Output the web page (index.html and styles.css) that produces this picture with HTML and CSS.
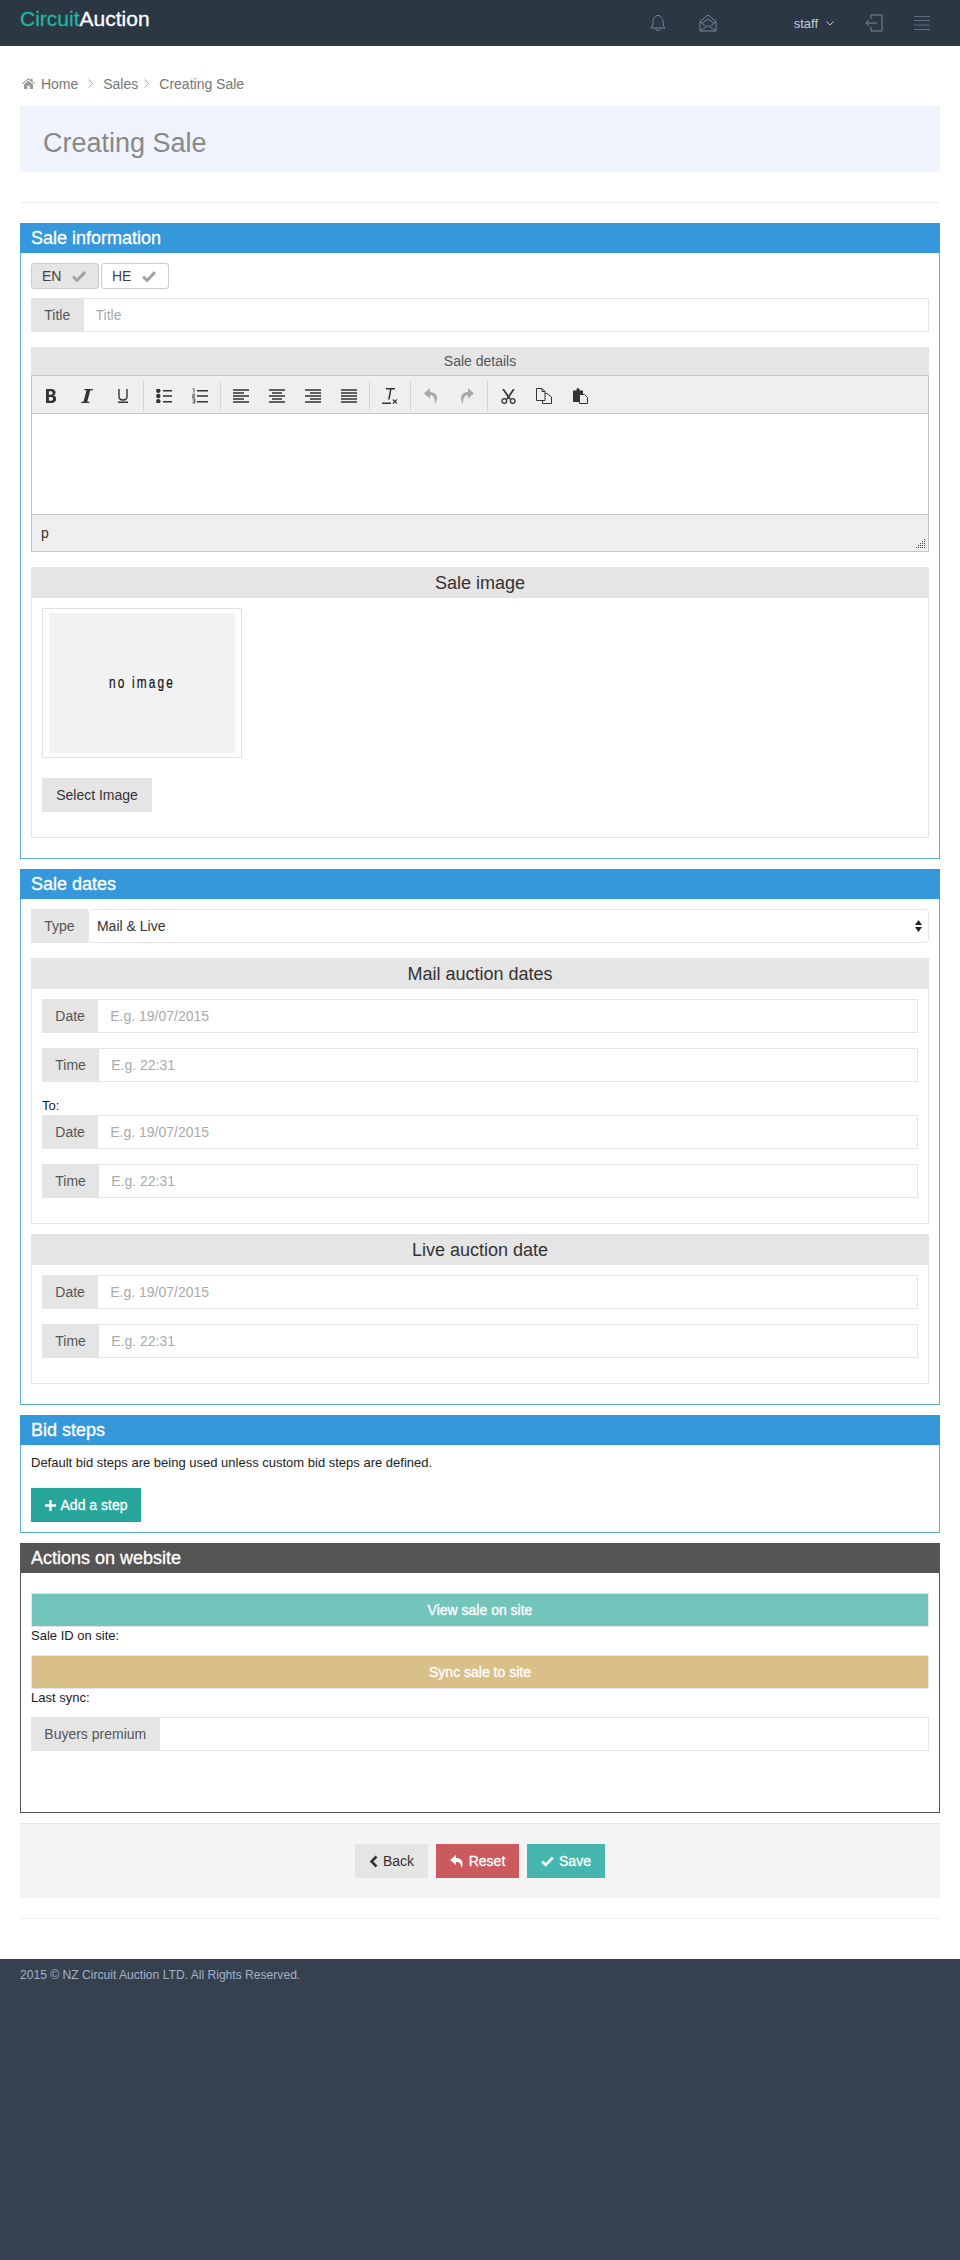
FILE: index.html
```html
<!DOCTYPE html>
<html lang="en">
<head>
    <meta charset="UTF-8">
    <meta name="viewport" content="width=device-width, initial-scale=1.0">
    <title>Creating Sale</title>
    <link rel="stylesheet" href="styles.css">
</head>
<body>
    <header class="topbar">
        <a class="logo" href="#"><span class="logo-circuit">Circuit</span>Auction</a>
        <nav class="top-nav">
            <svg class="nav-bell" width="16" height="18" viewBox="0 0 16 18"><path d="M1 14c1.500-1.500 2-3 2-6 0-3.500 2-6.500 5-6.500s5 3 5 6.500c0 3 .5 4.500 2 6z M6 15c0 2 4 2 4 0" fill="none" stroke="#7b8797" stroke-width="1"/></svg>
            <svg class="nav-mail" width="18" height="18" viewBox="0 0 18 18"><path d="M1 7.500 9 1l8 6.500V17H1z M1 7.500l5.500 4.500M17 7.500 11.500 12M1 17l8-5.500L17 17M3.500 9 9 5l5.500 4" fill="none" stroke="#7b8797" stroke-width="1"/></svg>
            <span class="nav-user">staff</span>
            <svg class="nav-caret" width="8" height="5" viewBox="0 0 8 5"><path d="M.5.500 4 4 7.500.5" fill="none" stroke="#c2ccd8" stroke-width="1"/></svg>
            <svg class="nav-logout" width="18" height="18" viewBox="0 0 18 18"><path d="M6 5V1h11v16H6v-4M12 9H1M4 6 1 9l3 3" fill="none" stroke="#7b8797" stroke-width="1"/></svg>
            <svg class="nav-menu" width="16" height="14" viewBox="0 0 16 14"><path d="M0 .5h16M0 4.500h16M0 9h16M0 13.500h16" fill="none" stroke="#5f6b7a" stroke-width="1"/></svg>
        </nav>
    </header>

    <main class="page">
        <ul class="breadcrumb">
            <li class="crumb-home">
                <svg width="13" height="11" viewBox="0 0 13 11"><path d="M6.500 0 0 5.500l.7.8L6.500 1.500l5.800 4.800.7-.8L10.500 3.400V.8H9v1.300zM2 6.500V11h3.300V7.800h2.400V11H11V6.500L6.500 2.800z" fill="#999"/></svg>
                <a href="#">Home</a>
            </li>
            <li class="crumb-sep"><svg width="5" height="9" viewBox="0 0 5 9"><path d="M.5.500l4 4-4 4" fill="none" stroke="#aaa"/></svg></li>
            <li><a href="#">Sales</a></li>
            <li class="crumb-sep crumb-sep-tight"><svg width="5" height="9" viewBox="0 0 5 9"><path d="M.5.500l4 4-4 4" fill="none" stroke="#aaa"/></svg></li>
            <li><a href="#">Creating Sale</a></li>
        </ul>

        <div class="page-title">
            <h1>Creating Sale</h1>
        </div>
        <hr class="divider divider-top">

        <form>
            <section class="panel">
                <h2 class="panel-heading">Sale information</h2>
                <div class="panel-body">
                    <div class="lang-tabs">
                        <button type="button" class="lang-tab active">EN <svg width="14" height="12" viewBox="0 0 14 12"><path d="M1 6.500 5 10.500 13 2" fill="none" stroke="#a3a3a3" stroke-width="3"/></svg></button>
                        <button type="button" class="lang-tab">HE <svg width="14" height="12" viewBox="0 0 14 12"><path d="M1 6.500 5 10.500 13 2" fill="none" stroke="#a3a3a3" stroke-width="3"/></svg></button>
                    </div>
                    <div class="input-group">
                        <label class="addon" for="title">Title</label>
                        <input type="text" id="title" placeholder="Title">
                    </div>

                    <h3 class="sub-heading sub-heading-small">Sale details</h3>
                    <div class="editor">
                        <div class="editor-toolbar">
                            <div class="tool-group tool-group-first">
                                <span class="tool"><svg width="12" height="14" viewBox="0 0 12 14"><path d="M1 0h5c3 0 4.500 1.300 4.500 3.500 0 1.400-.8 2.500-2 3 1.600.4 2.700 1.700 2.700 3.300 0 2.600-1.800 4.200-5 4.200H1zM3.900 2.300v3.500h1.700c1.300 0 2-.6 2-1.800S6.900 2.300 5.600 2.300zm0 5.700v3.700h2c1.400 0 2.200-.7 2.200-1.900S7.300 8 5.900 8z" fill="#333"/></svg></span>
                                <span class="tool"><svg width="12" height="14" viewBox="0 0 12 14"><path d="M3.500 0H12l-.3 1.300H9.300L6.200 12.700h2.300L8.200 14H0l.3-1.300h2.200L5.600 1.300H3.200z" fill="#333"/></svg></span>
                                <span class="tool"><svg width="12" height="14" viewBox="0 0 12 14"><path d="M2 0v7.500c0 2.500 1.500 3.500 4 3.500s4-1 4-3.500V0M1 13.300h10" fill="none" stroke="#333" stroke-width="1.400"/></svg></span>
                            </div>
                            <div class="tool-group">
                                <span class="tool"><svg width="16" height="14" viewBox="0 0 16 14"><circle cx="2.300" cy="1.800" r="2.200" fill="#333"/><circle cx="2.300" cy="7" r="2.200" fill="#333"/><circle cx="2.300" cy="12.300" r="2.200" fill="#333"/><path d="M7 1.700h9M7 7h9M7 12.800h9" stroke="#333" stroke-width="1.500"/></svg></span>
                                <span class="tool"><svg width="16" height="16" viewBox="0 0 16 16"><path d="M.7 1.200 2 .7v4M.3 6.200h2.400v1.600H.6v1.700h2.400M.4 11h2.500v4H.4M.8 13h2" fill="none" stroke="#333" stroke-width=".8"/><path d="M5 2.700h11M5 8h11M5 13.800h11" stroke="#333" stroke-width="1.500"/></svg></span>
                            </div>
                            <div class="tool-group">
                                <span class="tool"><svg width="16" height="14" viewBox="0 0 16 14"><path d="M0 1h16M0 4h11M0 7h16M0 10h11M0 13h16" stroke="#333" stroke-width="1.500"/></svg></span>
                                <span class="tool"><svg width="16" height="14" viewBox="0 0 16 14"><path d="M0 1h16M3 4h10M0 7h16M3 10h10M0 13h16" stroke="#333" stroke-width="1.500"/></svg></span>
                                <span class="tool"><svg width="16" height="14" viewBox="0 0 16 14"><path d="M0 1h16M5 4h11M0 7h16M5 10h11M0 13h16" stroke="#333" stroke-width="1.500"/></svg></span>
                                <span class="tool"><svg width="16" height="14" viewBox="0 0 16 14"><path d="M0 1h16M0 4h16M0 7h16M0 10h16M0 13h16" stroke="#333" stroke-width="1.500"/></svg></span>
                            </div>
                            <div class="tool-group">
                                <span class="tool"><svg width="16" height="16" viewBox="0 0 16 16"><path d="M4 0h9v1.500H9.500L7.600 11.500H6L8 1.500H4zM0 14.500h9V16H0z" fill="#333"/><path d="M10.800 11.500l4 4M14.800 11.500l-4 4" stroke="#333" stroke-width="1.100"/></svg></span>
                            </div>
                            <div class="tool-group">
                                <span class="tool"><svg width="14" height="16" viewBox="0 0 14 16"><path d="M6 0 0 5.500 6 10.500V7.300c3.500 0 5 2.500 5 8.700 3-4 3.500-11.500-5-12z" fill="#a8a8a8"/></svg></span>
                                <span class="tool"><svg width="14" height="16" viewBox="0 0 14 16"><path d="M8 0l6 5.500-6 5V7.300c-3.500 0-5 2.500-5 8.700-3-4-3.500-11.500 5-12z" fill="#a8a8a8"/></svg></span>
                            </div>
                            <div class="tool-group tool-group-last">
                                <span class="tool"><svg width="15" height="15" viewBox="0 0 15 15"><circle cx="3.300" cy="12" r="2.300" fill="none" stroke="#333" stroke-width="1.300"/><circle cx="11.700" cy="12" r="2.300" fill="none" stroke="#333" stroke-width="1.300"/><path d="M2 0l7 10M13 0 6 10" stroke="#333" stroke-width="1.700"/></svg></span>
                                <span class="tool"><svg width="16" height="16" viewBox="0 0 16 16"><path d="M.5.500h5.500l3 3v9h-8.500zM6 .5v3h3M9 5.500h2l4.500 3.500v6.500H6.500v-3" fill="none" stroke="#333"/></svg></span>
                                <span class="tool"><svg width="15" height="16" viewBox="0 0 15 16"><path d="M0 2.500h3.500V1c0-1 3-1 3 0v1.500H10V6H6v8H0z" fill="#333"/><path d="M6.500 6.500h5l3 3v6h-8z" fill="#eee" stroke="#333"/></svg></span>
                            </div>
                        </div>
                        <div class="editor-area"></div>
                        <div class="editor-status">
                            <span>p</span>
                            <svg class="resize-grip" width="9" height="9" viewBox="0 0 9 9"><path d="M8 0h1v1H8zM6 2h1v1H6zM8 2h1v1H8zM4 4h1v1H4zM6 4h1v1H6zM8 4h1v1H8zM2 6h1v1H2zM4 6h1v1H4zM6 6h1v1H6zM8 6h1v1H8zM0 8h1v1H0zM2 8h1v1H2zM4 8h1v1H4zM6 8h1v1H6zM8 8h1v1H8z" fill="#444"/></svg>
                        </div>
                    </div>

                    <h3 class="sub-heading">Sale image</h3>
                    <div class="box box-image">
                        <div class="thumb"><div class="thumb-inner"><span>no image</span></div></div>
                        <button type="button" class="btn btn-default">Select Image</button>
                    </div>
                </div>
            </section>

            <section class="panel">
                <h2 class="panel-heading">Sale dates</h2>
                <div class="panel-body">
                    <div class="input-group input-group-type">
                        <label class="addon" for="type">Type</label>
                        <div class="select-wrap">
                            <select id="type">
                                <option>Mail &amp; Live</option>
                                <option>Mail</option>
                                <option>Live</option>
                            </select>
                            <svg width="7" height="12" viewBox="0 0 7 12"><path d="M3.500 0 7 5H0zM3.500 12 0 7h7z" fill="#222"/></svg>
                        </div>
                    </div>

                    <h3 class="sub-heading">Mail auction dates</h3>
                    <div class="box box-dates">
                        <div class="input-group">
                            <label class="addon">Date</label>
                            <input type="text" placeholder="E.g. 19/07/2015">
                        </div>
                        <div class="input-group">
                            <label class="addon">Time</label>
                            <input type="text" placeholder="E.g. 22:31">
                        </div>
                        <div class="to-label">To:</div>
                        <div class="input-group">
                            <label class="addon">Date</label>
                            <input type="text" placeholder="E.g. 19/07/2015">
                        </div>
                        <div class="input-group">
                            <label class="addon">Time</label>
                            <input type="text" placeholder="E.g. 22:31">
                        </div>
                    </div>

                    <h3 class="sub-heading">Live auction date</h3>
                    <div class="box box-dates">
                        <div class="input-group">
                            <label class="addon">Date</label>
                            <input type="text" placeholder="E.g. 19/07/2015">
                        </div>
                        <div class="input-group">
                            <label class="addon">Time</label>
                            <input type="text" placeholder="E.g. 22:31">
                        </div>
                    </div>
                </div>
            </section>

            <section class="panel">
                <h2 class="panel-heading">Bid steps</h2>
                <div class="panel-body panel-body-steps">
                    <p class="help-text">Default bid steps are being used unless custom bid steps are defined.</p>
                    <button type="button" class="btn btn-step"><svg width="11" height="11" viewBox="0 0 11 11"><path d="M5.500 0v11M0 5.500h11" stroke="#fff" stroke-width="2.400"/></svg> Add a step</button>
                </div>
            </section>

            <section class="panel panel-dark">
                <h2 class="panel-heading">Actions on website</h2>
                <div class="panel-body panel-body-actions">
                    <button type="button" class="btn-wide btn-view">View sale on site</button>
                    <div class="note">Sale ID on site:</div>
                    <button type="button" class="btn-wide btn-sync">Sync sale to site</button>
                    <div class="note">Last sync:</div>
                    <div class="input-group">
                        <label class="addon" for="premium">Buyers premium</label>
                        <input type="text" id="premium">
                    </div>
                </div>
            </section>

            <div class="form-actions">
                <button type="button" class="btn btn-default btn-back"><svg width="9" height="13" viewBox="0 0 9 13"><path d="M7.500 1.500l-5 5 5 5" fill="none" stroke="#333" stroke-width="2.600"/></svg> Back</button>
                <button type="button" class="btn btn-reset"><svg width="14" height="13" viewBox="0 0 14 13"><path d="M6 0 0 5l6 5V7c3.500 0 5 1.500 5.500 6C14 8 12.500 3.500 6 3z" fill="#fff"/></svg> Reset</button>
                <button type="button" class="btn btn-save"><svg width="13" height="11" viewBox="0 0 13 11"><path d="M1.200 5.500 4.800 9 11.800 1.500" fill="none" stroke="#fff" stroke-width="2.600"/></svg> Save</button>
            </div>
        </form>
        <hr class="divider divider-bottom">
    </main>

    <footer class="footer">2015 © NZ Circuit Auction LTD. All Rights Reserved.</footer>
</body>
</html>
```

FILE: styles.css
```css
* {
    box-sizing: border-box;
}
html, body {
    height: 100%;
}
body {
    margin: 0;
    display: flex;
    flex-direction: column;
    min-height: 2260px;
    font-family: "Liberation Sans", Arial, sans-serif;
    font-size: 13px;
    color: #333;
    background: #fff;
}
input, select, button {
    font-family: inherit;
    font-size: 14px;
}

/* top bar */
.topbar {
    height: 46px;
    flex: none;
    display: flex;
    justify-content: space-between;
    background: #2c3744;
    padding: 0 20px;
}
.logo {
    font-size: 21px;
    line-height: 38px;
    color: #fff;
    text-decoration: none;
    -webkit-text-stroke: 0.3px;
}
.logo-circuit {
    color: #1fb5a0;
}
.top-nav {
    display: flex;
    align-items: center;
    padding-right: 10px;
}
.nav-bell {
    margin-right: 33px;
}
.nav-mail {
    margin-right: 77px;
}
.nav-user {
    color: #c2ccd8;
    font-size: 13px;
    margin-right: 8px;
}
.nav-caret {
    margin-right: 31px;
}
.nav-logout {
    margin-right: 31px;
}

/* breadcrumb and title */
.page {
    flex: none;
    padding: 0 20px;
}
.breadcrumb {
    display: flex;
    align-items: center;
    list-style: none;
    margin: 0;
    padding: 15px 2px 0;
    height: 60px;
    font-size: 14px;
}
.breadcrumb a {
    color: #777;
    text-decoration: none;
}
.crumb-home svg {
    margin-right: 2px;
}
.crumb-sep {
    margin: 0 10px;
    line-height: 0;
}
.crumb-sep-tight {
    margin: 0 10px 0 6px;
}
.page-title {
    height: 66px;
    background: #eff3fb;
    padding: 0 23px;
}
.page-title h1 {
    margin: 0;
    font-size: 27px;
    font-weight: 400;
    line-height: 74px;
    color: #888;
    height: 66px;
}
.divider {
    border: 0;
    border-top: 1px solid #eee;
    height: 0;
    margin: 0;
}
.divider-top {
    margin: 30px 0 20px;
}
.divider-bottom {
    margin-top: 20px;
    margin-bottom: 40px;
}

/* panels */
.panel {
    border: 1px solid #5dade2;
    margin-bottom: 10px;
}
.panel-heading {
    margin: -1px -1px 0;
    height: 30px;
    padding: 0 11px;
    font-size: 18px;
    font-weight: 400;
    line-height: 30px;
    color: #fff;
    background: #3498db;
    -webkit-text-stroke: 0.3px #fff;
}
.panel-body {
    padding: 10px 10px 20px;
}
.panel-body-steps {
    height: 87px;
    padding-bottom: 10px;
}
.panel-dark {
    border-color: #555;
}
.panel-dark .panel-heading {
    background: #555;
}
.panel-body-actions {
    height: 239px;
    padding-top: 20px;
}

/* language tabs */
.lang-tabs {
    display: flex;
    gap: 2px;
    margin-bottom: 9px;
}
.lang-tab {
    width: 68px;
    height: 26px;
    display: flex;
    align-items: center;
    justify-content: space-between;
    padding: 0 12px 0 10px;
    border: 1px solid #ccc;
    border-radius: 3px;
    background: #fff;
    color: #444;
}
.lang-tab.active {
    background: #e5e5e5;
}

/* form rows */
.input-group {
    display: flex;
    height: 34px;
}
.addon {
    flex: none;
    display: flex;
    align-items: center;
    padding: 0 13.3px;
    background: #e5e5e5;
    color: #555;
    font-size: 14px;
}
.input-group input {
    flex: 1;
    min-width: 0;
    border: 1px solid #e5e5e5;
    border-left: 0;
    padding: 0 12px;
    color: #333;
    outline: none;
}
.input-group input::placeholder {
    color: #aaa;
}
.select-wrap {
    position: relative;
    flex: 1;
}
.select-wrap select {
    width: 100%;
    height: 34px;
    appearance: none;
    border: 1px solid #e5e5e5;
    border-radius: 4px;
    background: #fff;
    padding: 0 8px;
    color: #333;
}
.select-wrap svg {
    position: absolute;
    right: 7px;
    top: 11px;
}
.input-group-type {
    margin-bottom: 15px;
}

/* sub headings and boxes */
.sub-heading {
    margin: 15px 0 0;
    height: 31px;
    text-align: center;
    font-size: 18px;
    font-weight: 400;
    line-height: 32px;
    background: #e5e5e5;
}
.input-group-type + .sub-heading {
    margin-top: 0;
}
.sub-heading-small {
    height: 28px;
    font-size: 14px;
    line-height: 28px;
    color: #555;
}
.box {
    border: 1px solid #e5e5e5;
    border-top: 0;
    padding: 10px;
}
.box-image {
    height: 240px;
}
.box-dates {
    padding-bottom: 25px;
    margin-bottom: 10px;
}
.box-dates:last-child {
    margin-bottom: 0;
}
.box-dates .input-group + .input-group {
    margin-top: 15px;
}
.box-dates + .sub-heading {
    margin-top: 0;
}
.to-label {
    height: 33px;
    padding-top: 14px;
    line-height: 19px;
    color: #222;
}

/* sale image */
.thumb {
    width: 200px;
    height: 150px;
    border: 1px solid #e0e0e0;
    padding: 4px 6px;
    margin-bottom: 20px;
}
.thumb-inner {
    height: 100%;
    background: #f2f2f2;
    display: flex;
    align-items: center;
    justify-content: center;
    color: #111;
    font-size: 17px;
    letter-spacing: 3px;
}
.thumb-inner span {
    transform: scaleX(0.7);
    -webkit-text-stroke: 0.2px;
}

/* editor */
.editor {
    border: 1px solid #c5c5c5;
    margin-bottom: 15px;
}
.editor-toolbar {
    height: 38px;
    display: flex;
    align-items: flex-end;
    padding: 0 0 2px 1px;
    background: #efefef;
    border-bottom: 1px solid #c5c5c5;
}
.tool-group {
    display: flex;
    height: 30px;
    padding: 0 2px;
    border-right: 1px solid #d6d6d6;
}
.tool-group-first {
    padding-left: 0;
}
.tool-group-last {
    border-right: 0;
}
.tool {
    width: 36px;
    display: flex;
    align-items: center;
    justify-content: center;
}
.editor-area {
    height: 100px;
    background: #fff;
}
.editor-status {
    position: relative;
    height: 37px;
    padding-left: 9px;
    background: #efefef;
    border-top: 1px solid #c5c5c5;
    line-height: 36px;
    font-size: 14px;
}
.resize-grip {
    position: absolute;
    right: 3px;
    bottom: 3px;
}

/* buttons */
.btn {
    display: inline-flex;
    align-items: center;
    justify-content: center;
    gap: 5px;
    height: 34px;
    border: 0;
    padding: 0;
    color: #fff;
}
.btn-default {
    width: 110px;
    background: #e5e5e5;
    color: #333;
}
.btn-step {
    width: 110px;
    background: #26a69a;
    -webkit-text-stroke: 0.3px;
}
.help-text {
    margin: 0 0 17px;
    line-height: 16px;
    color: #222;
}
.btn-wide {
    display: block;
    width: 100%;
    height: 34px;
    border: 1px solid #e5e5e5;
    color: #fff;
    -webkit-text-stroke: 0.3px;
}
.btn-view {
    background: #73c5bc;
}
.btn-sync {
    background: #d9c088;
}
.note {
    height: 28px;
    line-height: 18px;
    color: #222;
}

/* bottom actions */
.form-actions {
    display: flex;
    justify-content: center;
    gap: 8px;
    height: 75px;
    padding: 20px 0;
    background: #f4f4f4;
    border-top: 1px solid #e5e5e5;
}
.btn-back {
    width: 73px;
}
.btn-reset {
    width: 83px;
    background: #cb5a5e;
    -webkit-text-stroke: 0.3px;
}
.btn-save {
    width: 78px;
    background: #44b6ae;
    -webkit-text-stroke: 0.3px;
}

/* footer */
.footer {
    flex: 1;
    padding: 9px 20px;
    background: #364150;
    color: #a1b2c8;
    font-size: 12.1px;
    line-height: 15px;
}
```
